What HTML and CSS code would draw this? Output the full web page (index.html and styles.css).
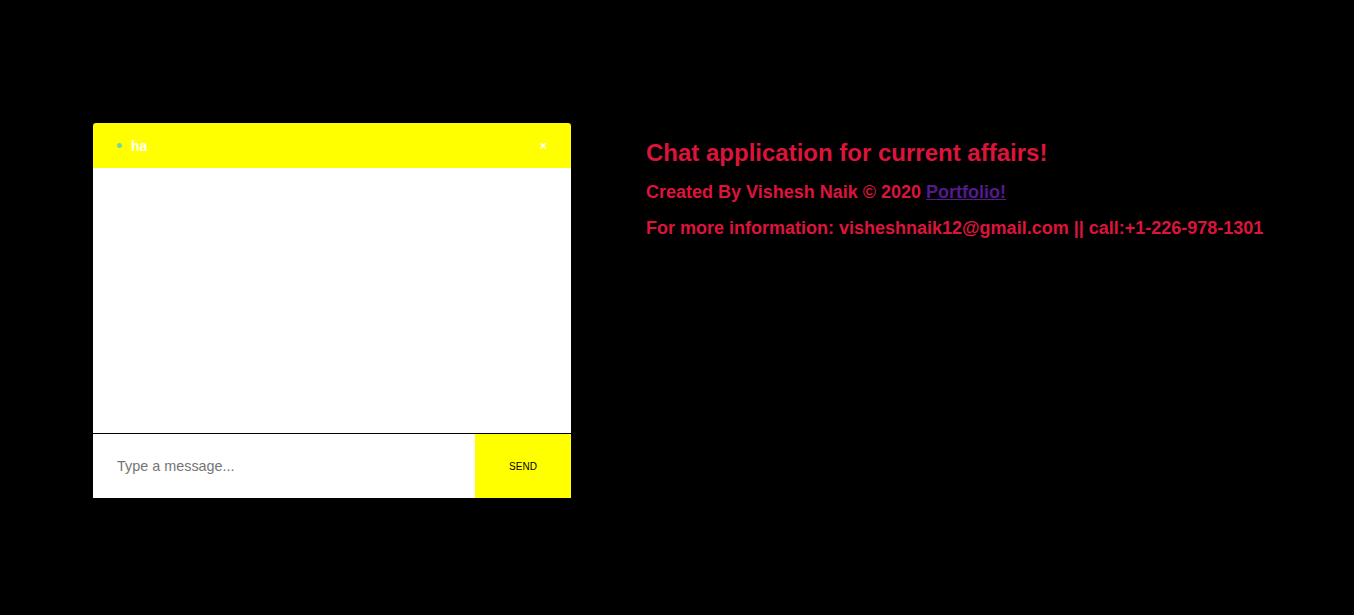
FILE: index.html
```html
<!DOCTYPE html>
<html>
<head>
<meta charset="utf-8">
<link rel="stylesheet" href="styles.css">
</head>
<body>
<div class="page">
  <div class="chat">
    <div class="chat-header">
      <div class="room"><span class="dot"></span><span class="room-name">ha</span></div>
      <span class="close">×</span>
    </div>
    <div class="messages"></div>
    <div class="composer">
      <input class="msg-input" type="text" placeholder="Type a message...">
      <button class="send">SEND</button>
    </div>
  </div>
  <div class="info">
    <h2 class="title">Chat application for current affairs!</h2>
    <h3 class="line">Created By Vishesh Naik © 2020 <a class="link" href="#">Portfolio!</a></h3>
    <h3 class="line">For more information: visheshnaik12@gmail.com || call:+1-226-978-1301</h3>
  </div>
</div>
</body>
</html>
```
FILE: styles.css
```css
html, body {
  margin: 0;
  padding: 0;
  background: #000;
  height: 100%;
}
body {
  font-family: "Liberation Sans", Arial, sans-serif;
}
.page {
  display: flex;
  align-items: flex-start;
  padding: 123px 0 0 93px;
  gap: 75px;
}
.chat {
  width: 478px;
  display: flex;
  flex-direction: column;
}
.chat-header {
  height: 45px;
  background: #ffff00;
  border-radius: 3px 3px 0 0;
  display: flex;
  align-items: center;
  justify-content: space-between;
  padding: 0 24px 0 24px;
  box-sizing: border-box;
}
.room {
  display: flex;
  align-items: center;
}
.dot {
  width: 5px;
  height: 5px;
  border-radius: 50%;
  background: #6fd9a0;
  margin-right: 9px;
}
.room-name {
  color: #fff;
  font-weight: bold;
  font-size: 14px;
}
.close {
  color: #fff;
  font-size: 13px;
  font-weight: bold;
}
.messages {
  height: 265px;
  background: #fff;
  border-bottom: 1px solid #000;
}
.composer {
  display: flex;
  height: 64px;
  background: #fff;
}
.msg-input {
  flex: 1;
  border: none;
  outline: none;
  padding: 0 0 0 24px;
  font-family: "Liberation Sans", Arial, sans-serif;
  font-size: 14.4px;
  background: #fff;
  color: #333;
}
.msg-input::placeholder {
  color: #757575;
}
.send {
  width: 96px;
  border: none;
  background: #ffff00;
  font-family: "Liberation Sans", Arial, sans-serif;
  font-size: 10px;
  color: #000;
  padding: 0;
}
.info {
  padding-top: 16px;
}
.title {
  margin: 0 0 14px 0;
  font-size: 24px;
  color: #dc143c;
  line-height: 28px;
}
.line {
  margin: 0 0 14px 0;
  font-size: 18px;
  color: #dc143c;
  line-height: 22px;
}
.link {
  color: #551a8b;
}
```
